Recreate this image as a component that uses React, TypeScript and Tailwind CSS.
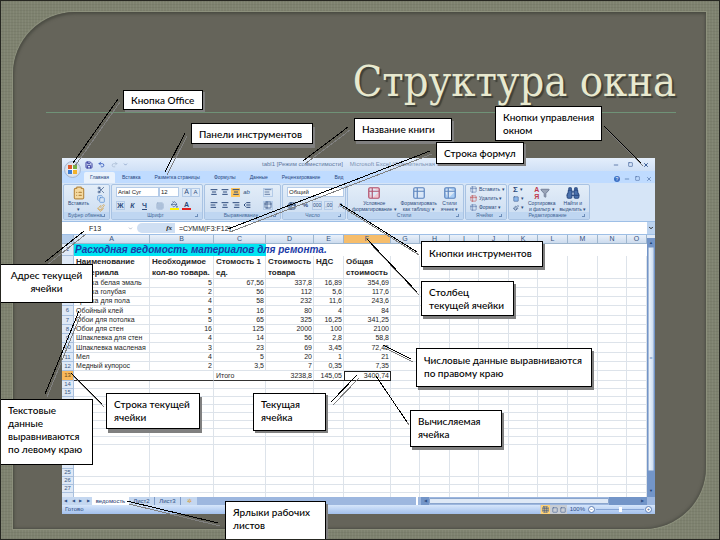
import React from "react";
import {
  AlignCenter,
  AlignLeft,
  AlignRight,
  Binoculars,
  ChevronDown,
  ClipboardList,
  Copy,
  Filter,
  Grid3x3,
  IndentDecrease,
  Minus,
  Paintbrush,
  PaintBucket,
  Redo2,
  Save,
  Scissors,
  Square,
  Table2,
  Undo2,
  X,
} from "lucide-react";

const ICON = "h-2 w-2 shrink-0";

function Group({ title, className, children }: { title: string; className: string; children: React.ReactNode }) {
  return (
    <section className={`flex h-full shrink-0 flex-col overflow-hidden rounded-[2px] border border-[#a9c3e3] bg-linear-to-b from-[#e3edf8] to-[#cbdcf1] ${className}`}>
      <div className="flex min-h-0 flex-1 items-center gap-1 px-1">{children}</div>
      <div className="flex h-[7px] items-center bg-[#bfd6f1] px-1 text-[5px] leading-[7px] text-[#3f6696]">
        <span className="flex-1 text-center whitespace-nowrap">{title}</span>
        <span className="h-[3px] w-[3px] border-r border-b border-[#6b8cb8]" />
      </div>
    </section>
  );
}

function Tool({ label, children, className = "" }: { label: string; children: React.ReactNode; className?: string }) {
  return (
    <button type="button" aria-label={label} className={`flex h-[9px] min-w-[9px] items-center justify-center ${className}`}>
      {children}
    </button>
  );
}

function BigTool({ icon, lines }: { icon: React.ReactNode; lines: string[] }) {
  return (
    <button type="button" className="flex flex-col items-center text-[5px] leading-[6px] whitespace-nowrap text-[#2c4a7c]">
      {icon}
      {lines.map((line) => (
        <span key={line}>{line}</span>
      ))}
    </button>
  );
}

function SmallTool({ icon, text }: { icon: React.ReactNode; text: string }) {
  return (
    <button type="button" className="flex h-[9px] items-center gap-[2px] text-[5px] leading-[9px] whitespace-nowrap text-[#2c4a7c]">
      {icon}
      {text}
    </button>
  );
}

function TitleBar() {
  return (
    <div className="flex h-[13px] items-center bg-linear-to-b from-[#e4eefb] to-[#cfe0f6] pr-[5px] pl-[22px] text-[#3d5f96]">
      <div className="flex items-center gap-1">
        <Tool label="Сохранить"><Save className="h-[8px] w-[8px] text-[#3a3fa0]" strokeWidth={3} /></Tool>
        <Tool label="Отменить"><Undo2 className="h-[7px] w-[7px] text-[#3a60c0]" strokeWidth={3} /></Tool>
        <Tool label="Вернуть"><Redo2 className="h-[7px] w-[7px] text-[#9fb2cc]" /></Tool>
        <ChevronDown className="h-[5px] w-[5px]" />
      </div>
      <p className="flex flex-1 gap-[7px] pl-[134px] text-[6px] leading-[13px] whitespace-nowrap">
        <span className="text-[#5f789e]">tabl1 [Режим совместимости]</span>
        <span className="text-[#7d93b4]">Microsoft Excel (Сомнительная в</span>
      </p>
      <div className="flex items-center justify-end gap-[6px]">
        <Tool label="Свернуть"><Minus className="h-[6px] w-[6px]" strokeWidth={3} /></Tool>
        <Tool label="Развернуть"><Square className="h-[5px] w-[5px]" strokeWidth={3} /></Tool>
        <Tool label="Закрыть"><X className="h-[6px] w-[6px]" strokeWidth={4} /></Tool>
      </div>
    </div>
  );
}

const RIBBON_TABS = ["Вставка", "Разметка страницы", "Формулы", "Данные", "Рецензирование", "Вид"];

function RibbonTabs() {
  return (
    <div className="flex h-[12px] items-end bg-[#bfdbff] pl-[22px] text-[5px] leading-[11px] text-[#1f4580]">
      <button type="button" className="h-[11px] w-[31px] rounded-t-[2px] bg-[#eaf2fc]">Главная</button>
      <div className="flex gap-[14px] pl-[7px]">
        {RIBBON_TABS.map((tab) => (
          <button key={tab} type="button" className="whitespace-nowrap">{tab}</button>
        ))}
      </div>
      <div className="flex flex-1 items-center justify-end gap-[2px] pr-[2px]">
        <span className="h-[6px] w-[6px] rounded-full bg-[#3b6fc4] text-center text-[5px] leading-[6px] text-white">?</span>
        <Tool label="Свернуть книгу"><Minus className="h-[6px] w-[6px]" /></Tool>
        <Tool label="Развернуть книгу"><Square className="h-[5px] w-[5px]" /></Tool>
        <Tool label="Закрыть книгу"><X className="h-[6px] w-[6px]" /></Tool>
      </div>
    </div>
  );
}

function Ribbon() {
  return (
    <div className="flex h-[38px] gap-px overflow-hidden bg-[#d6e5f7] p-px text-[#2c4a7c]">
      <Group title="Буфер обмена" className="w-[47px]">
        <BigTool icon={<ClipboardList className="h-[14px] w-[14px] fill-[#f4d9a0] text-[#b98c45]" />} lines={["Вставить", "▾"]} />
        <div className="flex flex-1 flex-col items-end">
          <Tool label="Вырезать"><Scissors className={ICON} /></Tool>
          <Tool label="Копировать"><Copy className={`${ICON} text-[#4d87cf]`} /></Tool>
          <Tool label="Формат по образцу"><Paintbrush className={`${ICON} text-[#d9a03c]`} /></Tool>
        </div>
      </Group>

      <Group title="Шрифт" className="w-[92px]">
        <div className="flex flex-1 flex-col gap-[4px]">
          <div className="flex items-center">
            <select aria-label="Шрифт" className="h-[10px] w-[43px] appearance-none border border-[#b4cbe8] bg-white px-px text-[6px] leading-[8px] text-[#222]">
              <option>Arial Cyr</option>
            </select>
            <select aria-label="Размер шрифта" className="h-[10px] w-[20px] appearance-none border border-[#b4cbe8] bg-white px-px text-[6px] leading-[8px] text-[#222]">
              <option>12</option>
            </select>
            <Tool label="Увеличить" className="ml-[3px] border border-[#b4cbe8] text-[7px]">A</Tool>
            <Tool label="Уменьшить" className="border border-[#b4cbe8] text-[6px]">A</Tool>
          </div>
          <div className="flex items-center gap-[3px] text-[7px] leading-[9px]">
            <Tool label="Полужирный" className="border border-[#b4cbe8] font-bold">Ж</Tool>
            <Tool label="Курсив" className="font-bold italic">К</Tool>
            <Tool label="Подчёркнутый" className="font-bold underline">Ч</Tool>
            <Tool label="Границы" className="ml-[3px]"><Grid3x3 className={`${ICON} text-[#8fa6c5]`} /></Tool>
            <Tool label="Заливка" className="ml-[3px] border-b-2 border-[#fff200]"><PaintBucket className="h-[7px] w-[7px]" /></Tool>
            <Tool label="Цвет текста" className="border-b-2 border-[#e02020] font-bold">А</Tool>
          </div>
        </div>
      </Group>

      <Group title="Выравнивание" className="w-[77px]">
        <div className="flex flex-1 flex-col gap-[4px]">
          <div className="flex items-center gap-[2px]">
            <Tool label="По верхнему краю"><AlignCenter className={ICON} strokeWidth={3} /></Tool>
            <Tool label="По середине"><AlignCenter className={ICON} strokeWidth={3} /></Tool>
            <Tool label="По нижнему краю" className="bg-[#ffc65c]"><AlignCenter className={ICON} strokeWidth={3} /></Tool>
            <Tool label="Ориентация" className="text-[6px] italic">ab</Tool>
            <Tool label="Перенос текста" className="ml-[10px] border border-[#b4cbe8]"><AlignLeft className={ICON} /></Tool>
          </div>
          <div className="flex items-center gap-[2px]">
            <Tool label="По левому краю"><AlignLeft className={ICON} strokeWidth={3} /></Tool>
            <Tool label="По центру"><AlignCenter className={ICON} strokeWidth={3} /></Tool>
            <Tool label="По правому краю"><AlignRight className={ICON} strokeWidth={3} /></Tool>
            <Tool label="Уменьшить отступ"><IndentDecrease className={ICON} strokeWidth={3} /></Tool>
            <Tool label="Объединить" className="ml-[10px] border border-[#b4cbe8]"><Table2 className={ICON} /></Tool>
          </div>
        </div>
      </Group>

      <Group title="Число" className="w-[64px]">
        <div className="flex flex-1 flex-col gap-[4px]">
          <select aria-label="Числовой формат" className="h-[10px] w-full appearance-none border border-[#b4cbe8] bg-white px-px text-[6px] leading-[8px] text-[#222]">
            <option>Общий</option>
          </select>
          <div className="flex items-center gap-[2px] text-[6px] leading-[9px]">
            <Tool label="Денежный"><Table2 className={ICON} strokeWidth={3} /></Tool>
            <Tool label="Процентный" className="ml-[3px] font-bold">%</Tool>
            <Tool label="С разделителями" className="border border-[#b4cbe8] text-[5px]">000</Tool>
            <Tool label="Увеличить разрядность" className="border border-[#b4cbe8] text-[5px]">,00</Tool>
            <Tool label="Уменьшить разрядность" className="text-[5px]">,0</Tool>
          </div>
        </div>
      </Group>

      <Group title="Стили" className="w-[117px]">
        <BigTool icon={<Table2 className="h-[14px] w-[14px] fill-[#f2c6cf] text-[#b0506c]" />} lines={["Условное", "форматирование ▾"]} />
        <BigTool icon={<Table2 className="h-[14px] w-[14px] fill-[#d7e6fa] text-[#5a83bd]" />} lines={["Форматировать", "как таблицу ▾"]} />
        <BigTool icon={<Table2 className="h-[14px] w-[14px] fill-[#a9cdf5] text-[#5a83bd]" />} lines={["Стили", "ячеек ▾"]} />
      </Group>

      <Group title="Ячейки" className="w-[42px]">
        <div className="flex flex-col">
          <SmallTool icon={<Table2 className="h-[7px] w-[7px] text-[#5876a8]" />} text="Вставить ▾" />
          <SmallTool icon={<Table2 className="h-[7px] w-[7px] text-[#c04a4a]" />} text="Удалить ▾" />
          <SmallTool icon={<Table2 className="h-[7px] w-[7px] text-[#5876a8]" />} text="Формат ▾" />
        </div>
      </Group>

      <Group title="Редактирование" className="w-[82px]">
        <div className="flex flex-col">
          <SmallTool icon={<b className="text-[8px]">Σ</b>} text="▾" />
          <SmallTool icon={<Square className="h-[6px] w-[6px] fill-[#8db8ec]" />} text="▾" />
          <SmallTool icon={<Paintbrush className="h-[6px] w-[6px]" />} text="▾" />
        </div>
        <BigTool
          icon={
            <span className="flex h-[14px] items-center text-[7px] leading-[7px] font-bold">
              <span className="flex w-[6px] flex-col text-[#c0394b]">
                <span>А</span>
                <span>Я</span>
              </span>
              <Filter className="h-[10px] w-[10px] fill-[#9aa5b8] text-[#69768f]" />
            </span>
          }
          lines={["Сортировка", "и фильтр ▾"]}
        />
        <BigTool icon={<Binoculars className="h-[14px] w-[14px] fill-[#4a71ad] text-[#2f4f86]" />} lines={["Найти и", "выделить ▾"]} />
      </Group>
    </div>
  );
}

function FormulaBar() {
  return (
    <div className="flex h-[14px] items-center border-y border-[#9ebfe6] bg-white text-[7px] leading-[12px] text-[#222]">
      <input aria-label="Имя ячейки" defaultValue="F13" className="h-full w-[66px] bg-white text-center" />
      <ChevronDown className="h-[5px] w-[5px] text-[#52698f]" />
      <div className="ml-[4px] flex h-[10px] w-[38px] items-center justify-end rounded-l-full bg-[#cfdff3] pr-[3px] font-['Liberation_Serif',serif] font-bold italic">
        fx
      </div>
      <input aria-label="Формула" defaultValue="=СУММ(F3:F12)" className="h-full min-w-0 flex-1 bg-white pl-[4px]" />
      <button type="button" aria-label="Развернуть строку формул" className="flex h-full w-2 items-center justify-center bg-[#bcd3ef]">
        <ChevronDown className="h-[6px] w-[6px]" strokeWidth={4} />
      </button>
    </div>
  );
}

const COLUMNS = [
  { name: "A", width: "w-[76px]" },
  { name: "B", width: "w-[64px]" },
  { name: "C", width: "w-[52px]" },
  { name: "D", width: "w-[48px]" },
  { name: "E", width: "w-[30px]" },
  { name: "F", width: "w-[47px]" },
  { name: "G", width: "w-[29px]" },
  { name: "H", width: "w-[30px]" },
  { name: "I", width: "w-[29px]" },
  { name: "J", width: "w-[30px]" },
  { name: "K", width: "w-[29px]" },
  { name: "L", width: "w-[30px]" },
  { name: "M", width: "w-[30px]" },
  { name: "N", width: "w-[29px]" },
  { name: "O", width: "" },
];

const TRAILING = COLUMNS.slice(6);

const HEADINGS = ["Наименование материала", "Необходимое кол-во товара.", "Стомость 1 ед.", "Стоимость товара", "НДС", "Общая стоимость"];

const ITEMS = [
  ["Краска белая эмаль", "5", "67,56", "337,8", "16,89", "354,69"],
  ["Краска голубая", "2", "56", "112", "5,6", "117,6"],
  ["Краска для пола", "4", "58", "232", "11,6", "243,6"],
  ["Обойный клей", "5", "16", "80", "4", "84"],
  ["Обои для потолка", "5", "65", "325", "16,25", "341,25"],
  ["Обои для стен", "16", "125", "2000", "100", "2100"],
  ["Шпаклевка для стен", "4", "14", "56", "2,8", "58,8"],
  ["Шпаклевка масленая", "3", "23", "69", "3,45", "72,45"],
  ["Мел", "4", "5", "20", "1", "21"],
  ["Медный купорос", "2", "3,5", "7", "0,35", "7,35"],
];

const EMPTY_ROWS = [14, 15, 16, 17, 18, 19, 20, 21, 22, 23, 24, 25, 26, 27, 28];

// Rows whose numbers lie wholly under a callout.
const COVERED_ROWS = [2, 3, 4, 5, 16, 17, 18, 19, 20, 21, 22, 23, 24];

function RowHead({ n, active = false }: { n: number; active?: boolean }) {
  return (
    <th
      scope="row"
      className={`border-r border-b border-[#a9c0de] p-0 text-center text-[6px] leading-[7px] font-normal ${active ? "bg-[#f8b85c] text-[#6b4a1a]" : "bg-[#dfe9f6] text-[#3f5b86]"}`}
    >
      {COVERED_ROWS.includes(n) ? null : n}
    </th>
  );
}

const CELL = "border-r border-b border-[#dde3ea] p-0";

function Sheet() {
  return (
    <table className="w-full table-fixed border-separate border-spacing-0 bg-white text-[7px] leading-[8px] text-[#262626]">
      <colgroup>
        <col className="w-[12px]" />
        {COLUMNS.map((c) => (
          <col key={c.name} className={c.width} />
        ))}
      </colgroup>
      <thead>
        <tr className="h-[9px]">
          <th className="border-r border-b border-[#9eb6ce] bg-[#b5cdea] p-0" />
          {COLUMNS.map((c) => (
            <th
              key={c.name}
              scope="col"
              className={`border-r border-b border-[#9eb6ce] p-0 text-[7px] leading-[8px] font-normal text-[#35517c] ${c.name === "F" ? "bg-[#f6bd6b]" : "bg-linear-to-b from-[#eaf1fa] to-[#ccdbee]"}`}
            >
              {c.name}
            </th>
          ))}
        </tr>
      </thead>
      <tbody>
        <tr className="h-[12px]">
          <RowHead n={1} />
          <td colSpan={3} className="overflow-visible bg-[#00e5f2] p-0 pl-px">
            <div className="relative z-10 text-[10px] leading-[12px] font-bold whitespace-nowrap text-[#1c3ca8] italic">
              Расходная ведомость материалов для ремонта.
            </div>
          </td>
          <td colSpan={12} className="p-0" />
        </tr>
        <tr className="h-[22px] text-[8px] leading-[11px]">
          <RowHead n={2} />
          {HEADINGS.map((h) => (
            <td key={h} className={`${CELL} pl-[2px] text-left align-top font-bold`}>{h}</td>
          ))}
          {TRAILING.map((c) => (
            <td key={c.name} className={CELL} />
          ))}
        </tr>
        {ITEMS.map((item, i) => (
          <tr key={item[0]} className={i % 4 === 3 ? "h-[10px]" : "h-[9px]"}>
            <RowHead n={i + 3} />
            {item.map((value, j) => (
              <td key={j} className={`${CELL} whitespace-nowrap ${j === 0 ? "pl-[2px] text-left" : "pr-px text-right"}`}>{value}</td>
            ))}
            {TRAILING.map((c) => (
              <td key={c.name} className={CELL} />
            ))}
          </tr>
        ))}
        <tr className="h-[10px]">
          <RowHead n={13} active />
          <td className="border-b border-[#333] p-0" />
          <td className="border-r border-b border-r-[#dde3ea] border-b-[#333] p-0" />
          <td className="border-b border-[#333] p-0 pl-[2px]">Итого</td>
          <td className="border-r border-b border-r-[#dde3ea] border-b-[#333] p-0 pr-px text-right">3238,8</td>
          <td className="border-b border-[#333] p-0 pr-[2px] text-right">145,05</td>
          <td className="border border-[#222] p-0 pr-px text-right">3400,74</td>
          {TRAILING.map((c) => (
            <td key={c.name} className={CELL} />
          ))}
        </tr>
        {EMPTY_ROWS.map((n) => (
          <tr key={n} className={n === 28 ? "h-[5px]" : "h-2"}>
            {n === 28 ? <th className="border-r border-[#a9c0de] bg-[#dfe9f6] p-0" /> : <RowHead n={n} />}
            {COLUMNS.map((c) => (
              <td
                key={c.name}
                className={n > 21 && n < 25 ? "border-r border-[#dde3ea] p-0" : CELL}
              />
            ))}
          </tr>
        ))}
      </tbody>
    </table>
  );
}

function SheetTabs() {
  return (
    <div className="flex h-2 items-center bg-[#9db7df] text-[6px] leading-[8px] text-[#2f4f86]">
      <div className="flex h-full w-[30px] items-center justify-around bg-[#c4d7f0] text-[4px]">
        <span>◀</span><span>◀</span><span>▶</span><span>▶</span>
      </div>
      <button type="button" className="h-full w-[37px] bg-white text-[#1c3870]">ведомость</button>
      <button type="button" className="h-full w-[26px] border-r border-[#7f9cc8] bg-[#c4d7f0]">Лист2</button>
      <button type="button" className="h-full w-[26px] border-r border-[#7f9cc8] bg-[#c4d7f0]">Лист3</button>
      <span className="h-full w-[16px] bg-[#c4d7f0] text-center text-[#d9a03c]">✲</span>
      <div className="flex h-full flex-1 items-center justify-end pr-2">
        <span className="h-full w-[2px] bg-white" />
        <span className="ml-[3px] h-full w-[8px] bg-[#7395c8] text-center text-[4px]">◀</span>
        <span className="h-[6px] w-[180px] rounded-[1px] border border-[#8aa5cd] bg-[#dfe9f6]" />
        <span className="h-full w-[38px] bg-[#7395c8] pr-[3px] text-right text-[4px]">▶</span>
      </div>
    </div>
  );
}

function StatusBar() {
  return (
    <div className="flex h-[9px] items-center bg-linear-to-b from-[#d6e6fb] to-[#a3c0ec] px-[3px] text-[6px] leading-[9px] text-[#2f4f86]">
      <span className="flex-1">Готово</span>
      <span className="flex h-full w-[27px] items-center justify-around bg-[#c8cdd4]">
        <span className="h-full w-[9px] bg-[#ffd277] text-center"><Grid3x3 className="mx-auto mt-px h-[7px] w-[7px]" /></span>
        <Square className="h-[6px] w-[6px]" />
        <Square className="h-[6px] w-[6px]" />
      </span>
      <span className="px-[3px]">100%</span>
      <button type="button" aria-label="Уменьшить масштаб" className="h-[7px] w-[7px] rounded-full border border-[#5d7eb5] bg-white text-[5px] leading-[5px]">−</button>
      <input
        type="range"
        aria-label="Масштаб"
        defaultValue={50}
        className="mx-px h-px w-12 appearance-none bg-[#86a5d6] [&::-webkit-slider-thumb]:h-[5px] [&::-webkit-slider-thumb]:w-[3px] [&::-webkit-slider-thumb]:appearance-none [&::-webkit-slider-thumb]:bg-white"
      />
      <button type="button" aria-label="Увеличить масштаб" className="h-[7px] w-[7px] rounded-full border border-[#5d7eb5] bg-white text-[5px] leading-[5px]">+</button>
    </div>
  );
}

function ExcelWindow() {
  return (
    <div className="relative mr-[51px] ml-[49px] overflow-hidden bg-[#bfdbff] font-['Liberation_Sans',Arial,sans-serif]">
      <TitleBar />
      <RibbonTabs />
      <Ribbon />
      <FormulaBar />
      <div className="flex h-[262px] overflow-hidden">
        <div className="min-w-0 flex-1"><Sheet /></div>
        <div className="flex w-2 flex-col bg-[#7395c8]">
          <span className="h-[3px] bg-[#dfe9f6]" />
          <span className="h-[9px] text-center text-[4px] leading-[9px] text-[#20406f]">▲</span>
          <span className="mx-px flex h-[224px] items-center justify-center rounded-[1px] border border-[#a8bddb] bg-linear-to-r from-[#eef4fb] to-[#cfdef1] text-[5px] text-[#6f8fbd]">=</span>
          <span className="flex-1 pt-[18px] text-center text-[4px] leading-[4px] text-[#20406f]">▼</span>
        </div>
      </div>
      <SheetTabs />
      <StatusBar />
      <button type="button" aria-label="Кнопка Office" className="absolute top-[3px] left-[2px] grid h-[17px] w-[17px] grid-cols-2 place-content-center gap-px rounded-full border border-[#a4b6d2] bg-radial from-white to-[#c3cddd] px-[3px]">
        <span className="h-1 w-1 bg-[#e0592a]" />
        <span className="h-1 w-1 bg-[#76b043]" />
        <span className="h-1 w-1 bg-[#3d7bd0]" />
        <span className="h-1 w-1 bg-[#f3b22c]" />
      </button>
    </div>
  );
}

const POINTERS = [
  [118, 99, 73, 163],
  [185, 133, 165, 172],
  [348, 127, 303, 161],
  [430, 151, 228, 229],
  [604, 126, 641, 163],
  [417, 252, 340, 204],
  [417, 292, 367, 239],
  [411, 359, 383, 345],
  [45, 262, 84, 231],
  [45, 394, 79, 311],
  [102, 404, 71, 373],
  [331, 402, 357, 375],
  [407, 422, 376, 376],
  [218, 523, 127, 501],
];

function Pointers() {
  return (
    <svg width="720" height="540" className="pointer-events-none absolute top-0 left-0" shapeRendering="crispEdges">
      {POINTERS.map(([x1, y1, x2, y2]) => (
        <g key={`${x1}-${y1}`}>
          <line x1={x1 + 2} y1={y1 + 3} x2={x2 + 2} y2={y2 + 3} stroke="#808080" strokeWidth="1" />
          <line x1={x1} y1={y1} x2={x2} y2={y2} stroke="#000" strokeWidth="1" />
        </g>
      ))}
    </svg>
  );
}

const CALLOUTS = [
  { text: "Кнопка Office", box: "top-[90px] left-[123px] h-[20px] w-[80px] pt-[3px] shadow-[2px_2px_0_#808080]" },
  { text: "Панели инструментов", box: "top-[123px] left-[191px] h-[21px] w-[122px] pt-[4px] shadow-[2px_4px_0_#808080]" },
  { text: "Название книги", box: "top-[118px] left-[354px] h-[23px] w-[98px] pt-[4px] shadow-[2px_3px_0_#808080]" },
  { text: "Кнопки управления\nокном", box: "top-[106px] left-[495px] h-[35px] w-[107px] pt-[4px]" },
  { text: "Строка формул", box: "top-[142px] left-[436px] h-[22px] w-[88px] pt-[4px] shadow-[2px_2px_0_#808080]" },
  { text: "Кнопки инструментов", box: "top-[241px] left-[421px] h-[26px] w-[122px] pt-[5px] shadow-[2px_3px_0_#808080]" },
  { text: "Столбец\nтекущей ячейки", box: "top-[281px] left-[421px] h-[35px] w-[93px] pt-[4px] shadow-[2px_3px_0_#808080]" },
  { text: "Числовые данные выравниваются\nпо правому краю", box: "top-[348px] left-[416px] h-[39px] w-[176px] pt-[5px] shadow-[2px_3px_0_#808080]" },
  { text: "Адрес текущей\nячейки", box: "top-[264px] left-0 h-[39px] w-[93px] pt-[4px] text-center" },
  { text: "Текстовые\nданные\nвыравниваются\nпо левому краю", box: "top-[399px] left-0 h-[66px] w-[93px] pt-[4px]" },
  { text: "Строка текущей\nячейки", box: "top-[393px] left-[106px] h-[36px] w-[94px] pt-[4px] shadow-[2px_4px_0_#808080]" },
  { text: "Текущая\nячейка", box: "top-[393px] left-[253px] h-[38px] w-[73px] pt-[4px] shadow-[2px_2px_0_#808080]" },
  { text: "Вычисляемая\nячейка", box: "top-[410px] left-[410px] h-[37px] w-[92px] pt-[4px] shadow-[2px_3px_0_#808080]" },
  { text: "Ярлыки рабочих\nлистов", box: "top-[501px] left-[225px] h-[39px] w-[101px] border-b-0 pt-[4px] shadow-[2px_3px_0_#808080]" },
];

export default function App() {
  return (
    <main className="relative flex min-h-screen w-full flex-col overflow-hidden border border-[#262721] bg-[#7e826f] bg-[repeating-linear-gradient(0deg,#0000000d_0_1px,transparent_1px_3px),repeating-linear-gradient(90deg,#ffffff0d_0_1px,transparent_1px_3px)] pt-[11px] pr-[13px] pb-[10px] pl-[12px]">
      <div className="flex flex-1 flex-col rounded-tl-[62px] rounded-br-[62px] bg-[#65645a] shadow-[inset_1px_2px_3px_#4b4c43,inset_-1px_-1px_3px_#505148,0_0_1px_1px_#8f937f]">
        <header className="mr-[30px] ml-[33px] flex h-[101px] items-end justify-end border-b border-[#6f9277]">
          <h1 className="font-['DejaVu_Serif_Condensed','DejaVu_Serif',serif] text-[43px] leading-[61px] whitespace-nowrap text-[#e8e9cf] [text-shadow:2px_2px_1px_#3f4038]">
            Структура окна
          </h1>
        </header>
        <div className="pt-[45px] pb-[15px]">
          <ExcelWindow />
        </div>
      </div>
      <div className="absolute -top-px -left-px">
        <Pointers />
        {CALLOUTS.map(({ text, box }) => (
          <p
            key={text}
            className={`absolute border border-black bg-white px-[7px] font-['Lato','Open_Sans',sans-serif] text-[10px] leading-[13px] font-medium whitespace-pre text-black ${box}`}
          >
            {text}
          </p>
        ))}
      </div>
    </main>
  );
}
